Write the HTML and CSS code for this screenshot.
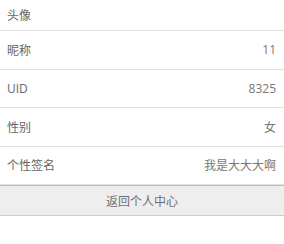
FILE: index.html
```html
<!DOCTYPE html>
<html lang="zh-CN">
<head>
  <meta charset="UTF-8" />
  <meta name="viewport" content="width=device-width, initial-scale=1.0" />
  <title>个人信息</title>
  <link rel="stylesheet" href="styles.css">
</head>
<body>

  <!-- 资料列表 -->
  <ul class="info-list">
    <li class="info-row first">
      <span class="label">头像</span>
    </li>
    <li class="info-row">
      <span class="label">昵称</span>
      <span class="value">11</span>
    </li>
    <li class="info-row">
      <span class="label">UID</span>
      <span class="value">8325</span>
    </li>
    <li class="info-row">
      <span class="label">性别</span>
      <span class="value">女</span>
    </li>
    <li class="info-row">
      <span class="label">个性签名</span>
      <span class="value">我是大大大啊</span>
    </li>
  </ul>

  <button class="back-btn">返回个人中心</button>

</body>
</html>
```

FILE: styles.css
```css
body {
  margin: 0;
  background: #fff;
  font-family: "Open Sans", "Noto Sans CJK SC", sans-serif;
  font-size: 12px;
  color: #666;
}

.info-list {
  list-style: none;
  margin: 0;
  padding: 0;
}

.info-row {
  display: flex;
  justify-content: space-between;
  align-items: center;
  height: 37.5px;
  padding: 0 8px 0 7px;
  border-bottom: 1px solid #e2e2e2;
}

.info-row.first {
  height: 30px;
}

.label {
  color: #666;
}

.value {
  color: #777;
}

.back-btn {
  display: block;
  width: 100%;
  height: 31px;
  margin: 0;
  padding: 0;
  background: #eee;
  color: #707070;
  font-family: inherit;
  font-size: 12px;
  border: none;
  border-top: 1px solid #bbb;
  border-bottom: 1px solid #ccc;
  cursor: pointer;
}
```
